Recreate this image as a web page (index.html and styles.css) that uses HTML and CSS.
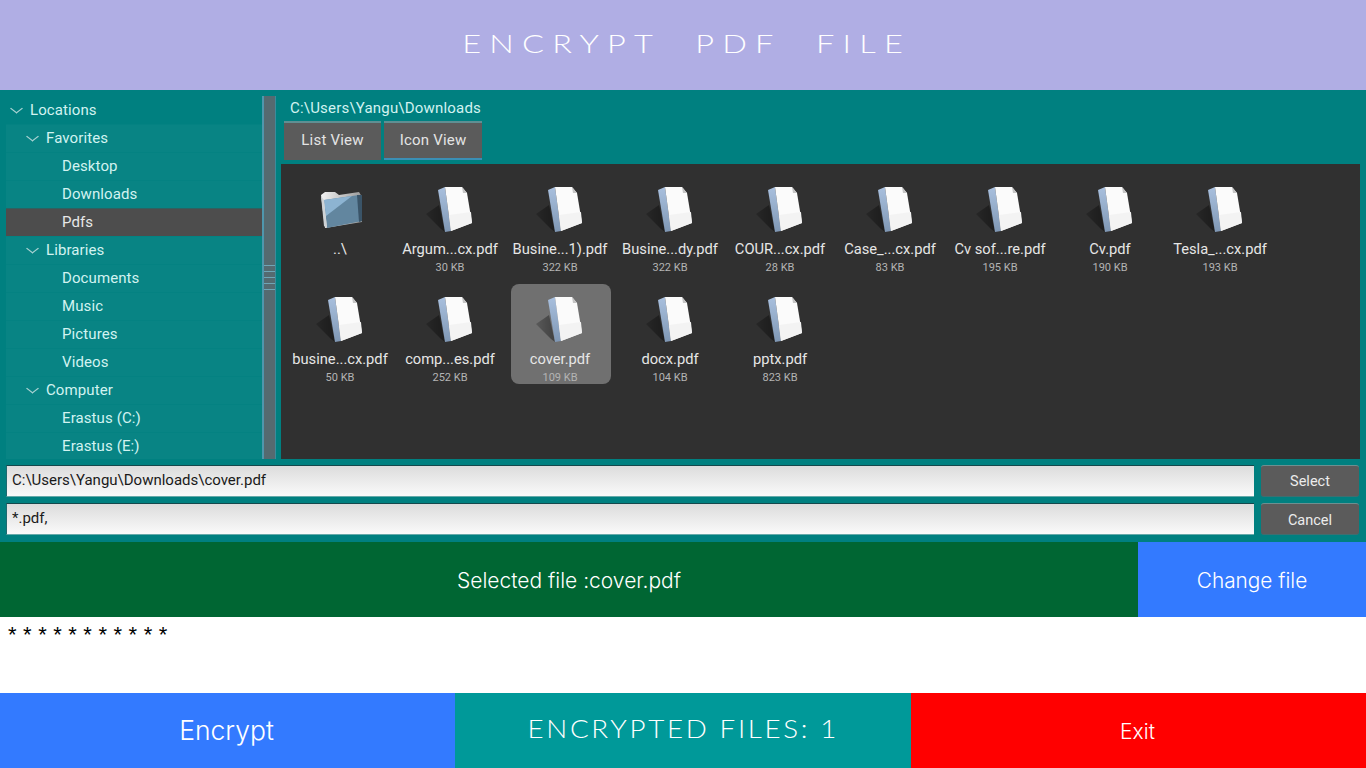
FILE: index.html
```html
<!DOCTYPE html>
<html lang="en">
<head>
    <meta charset="UTF-8">
    <meta name="viewport" content="width=device-width, initial-scale=1.0">
    <title>Encrypt PDF File</title>
    <link rel="stylesheet" href="styles.css">
</head>
<body>

    <svg class="icon-defs" width="0" height="0">
        <defs>
            <linearGradient id="docShadow" x1="0" y1="0" x2="1" y2="0">
                <stop offset="0" stop-color="#000" stop-opacity="0.2"/>
                <stop offset="0.5" stop-color="#000" stop-opacity="0.32"/>
                <stop offset="1" stop-color="#000" stop-opacity="0.42"/>
            </linearGradient>
            <linearGradient id="docSpine" x1="0" y1="0" x2="0" y2="1">
                <stop offset="0" stop-color="#a9c0de"/>
                <stop offset="1" stop-color="#7f97b4"/>
            </linearGradient>
            <linearGradient id="folderBack" x1="0" y1="0" x2="1" y2="0">
                <stop offset="0" stop-color="#f2f2f2"/>
                <stop offset="1" stop-color="#9a9a9a"/>
            </linearGradient>
            <symbol id="doc" viewBox="0 0 50 50">
                <polygon points="1,29 14,20 20,47 16,44" fill="url(#docShadow)"/>
                <polygon points="13,5 20,2 26,46 20,47" fill="url(#docSpine)"/>
                <polygon points="20,2 37,2 42,8 47,38 26,46" fill="#fbfbfb"/>
                <polygon points="24,30 46,27 47,38 26,46" fill="#f3f3f3"/>
                <polygon points="37,2 42,8 38,8" fill="#c4c4c4"/>
            </symbol>
            <symbol id="folder" viewBox="0 0 50 50">
                <polygon points="6,10 10,7 20,7 24,10 44,7 47,12 47,37 10,43" fill="url(#folderBack)"/>
                <polygon points="9,15 44,10 47,36 12,43" fill="#62869f"/>
                <polygon points="9,15 37,11 11,31" fill="#8db4d2"/>
                <polygon points="42,10 47,10 47,36 44,37" fill="#3a5468"/>
                <polygon points="6,11 9,15 12,43 9,41" fill="#cfd3d6"/>
            </symbol>
        </defs>
    </svg>

    <header class="title-bar">
        <h1 class="title-text">ENCRYPT PDF FILE</h1>
    </header>

    <main class="chooser">
        <div class="browser">
            <div class="side">
                <ul class="tree">
                    <li class="tree-row level-0 plain"><span class="arrow"></span>Locations</li>
                    <li class="tree-row level-1"><span class="arrow"></span>Favorites</li>
                    <li class="tree-row level-2">Desktop</li>
                    <li class="tree-row level-2">Downloads</li>
                    <li class="tree-row level-2 active">Pdfs</li>
                    <li class="tree-row level-1"><span class="arrow"></span>Libraries</li>
                    <li class="tree-row level-2">Documents</li>
                    <li class="tree-row level-2">Music</li>
                    <li class="tree-row level-2">Pictures</li>
                    <li class="tree-row level-2">Videos</li>
                    <li class="tree-row level-1"><span class="arrow"></span>Computer</li>
                    <li class="tree-row level-2">Erastus (C:)</li>
                    <li class="tree-row level-2">Erastus (E:)</li>
                </ul>
                <div class="splitter">
                    <span class="grip"></span>
                </div>
            </div>

            <div class="files">
                <div class="path">C:\Users\Yangu\Downloads</div>
                <div class="tabs">
                    <button class="tab list-tab">List View</button>
                    <button class="tab icon-tab">Icon View</button>
                </div>
                <div class="file-grid">
                    <div class="file"><svg class="file-icon"><use href="#folder"/></svg><span class="file-name">..\</span></div>
                    <div class="file"><svg class="file-icon"><use href="#doc"/></svg><span class="file-name">Argum...cx.pdf</span><span class="file-size">30 KB</span></div>
                    <div class="file"><svg class="file-icon"><use href="#doc"/></svg><span class="file-name">Busine...1).pdf</span><span class="file-size">322 KB</span></div>
                    <div class="file"><svg class="file-icon"><use href="#doc"/></svg><span class="file-name">Busine...dy.pdf</span><span class="file-size">322 KB</span></div>
                    <div class="file"><svg class="file-icon"><use href="#doc"/></svg><span class="file-name">COUR...cx.pdf</span><span class="file-size">28 KB</span></div>
                    <div class="file"><svg class="file-icon"><use href="#doc"/></svg><span class="file-name">Case_...cx.pdf</span><span class="file-size">83 KB</span></div>
                    <div class="file"><svg class="file-icon"><use href="#doc"/></svg><span class="file-name">Cv sof...re.pdf</span><span class="file-size">195 KB</span></div>
                    <div class="file"><svg class="file-icon"><use href="#doc"/></svg><span class="file-name">Cv.pdf</span><span class="file-size">190 KB</span></div>
                    <div class="file"><svg class="file-icon"><use href="#doc"/></svg><span class="file-name">Tesla_...cx.pdf</span><span class="file-size">193 KB</span></div>
                    <div class="file"><svg class="file-icon"><use href="#doc"/></svg><span class="file-name">busine...cx.pdf</span><span class="file-size">50 KB</span></div>
                    <div class="file"><svg class="file-icon"><use href="#doc"/></svg><span class="file-name">comp...es.pdf</span><span class="file-size">252 KB</span></div>
                    <div class="file selected"><svg class="file-icon"><use href="#doc"/></svg><span class="file-name">cover.pdf</span><span class="file-size">109 KB</span></div>
                    <div class="file"><svg class="file-icon"><use href="#doc"/></svg><span class="file-name">docx.pdf</span><span class="file-size">104 KB</span></div>
                    <div class="file"><svg class="file-icon"><use href="#doc"/></svg><span class="file-name">pptx.pdf</span><span class="file-size">823 KB</span></div>
                </div>
            </div>
        </div>

        <div class="field-row">
            <input class="field" type="text" value="C:\Users\Yangu\Downloads\cover.pdf">
            <button class="small-btn">Select</button>
        </div>
        <div class="field-row">
            <input class="field" type="text" value="*.pdf,">
            <button class="small-btn cancel-btn">Cancel</button>
        </div>
    </main>

    <section class="selected-bar">
        <div class="selected-name">Selected file :cover.pdf</div>
        <button class="change-btn">Change file</button>
    </section>

    <section class="password-box">* * * * * * * * * * *</section>

    <footer class="bottom-bar">
        <button class="bottom-btn encrypt-btn">Encrypt</button>
        <div class="bottom-btn count-box"><span class="count-text">ENCRYPTED FILES: 1</span></div>
        <button class="bottom-btn exit-btn">Exit</button>
    </footer>

</body>
</html>
```

FILE: styles.css
```css
* {
    box-sizing: border-box;
}

html, body {
    height: 100%;
}

body {
    margin: 0;
    height: 768px;
    overflow: hidden;
    display: flex;
    flex-direction: column;
    font-family: Roboto, "Liberation Sans", sans-serif;
    background-color: #fff;
}

button {
    font-family: inherit;
    border: none;
    padding: 0;
}

.icon-defs {
    position: absolute;
}

/* top title */
.title-bar {
    height: 90px;
    flex: none;
    display: flex;
    justify-content: center;
    align-items: center;
    padding: 0 0 4px 7px;
    background-color: #b0aee4;
}

.title-text {
    margin: 0;
    font-family: Lato, sans-serif;
    font-size: 25px;
    font-weight: 300;
    letter-spacing: 6.3px;
    word-spacing: 14px;
    color: #fff;
    transform: scaleX(1.3);
}

/* file chooser */
.chooser {
    height: 452px;
    flex: none;
    padding: 6px 6px 0;
    background-color: #008080;
}

.browser {
    display: flex;
    height: 363px;
    margin-bottom: 6px;
}

.side {
    width: 270px;
    flex: none;
    display: flex;
}

.tree {
    width: 256px;
    margin: 0;
    padding: 0;
    list-style: none;
    overflow: hidden;
}

.tree-row {
    height: 28px;
    display: flex;
    align-items: center;
    font-size: 15px;
    letter-spacing: 0.1px;
    color: #d2f3f1;
    background-color: rgba(255, 255, 255, 0.03);
    box-shadow: inset 0 1px 0 rgba(0, 128, 128, 0.4);
}

.tree-row.plain {
    background-color: transparent;
}

.tree-row.active {
    background-color: #4d4d4d;
    color: #e8e8e8;
}

.level-0 {
    padding-left: 5px;
}

.level-1 {
    padding-left: 21px;
}

.level-2 {
    padding-left: 56px;
}

.arrow {
    width: 7px;
    height: 7px;
    margin: -4px 10px 0 2px;
    border-right: 1px solid #a9d2d2;
    border-bottom: 1px solid #a9d2d2;
    transform: scaleX(1.3) rotate(45deg);
}

.splitter {
    width: 14px;
    display: flex;
    align-items: center;
    background-color: #556a70;
    border-left: 2px solid #4f97ad;
    border-right: 1px solid #3c8b9c;
}

.grip {
    display: block;
    width: 100%;
    height: 25px;
    background-image: repeating-linear-gradient(#6fa6b6 0, #6fa6b6 1px, transparent 1px, transparent 6px);
}

.files {
    flex: 1;
    display: flex;
    flex-direction: column;
    padding-left: 5px;
}

.path {
    height: 24px;
    padding-left: 9px;
    line-height: 24px;
    font-size: 15px;
    letter-spacing: 0.2px;
    color: #d2f3f1;
}

.tabs {
    display: flex;
    gap: 3px;
    height: 39px;
    margin: 1px 0 4px 3px;
}

.tab {
    height: 39px;
    font-size: 15px;
    letter-spacing: 0.2px;
    color: #e4e4e4;
    background-color: #5b5b5b;
    border-top: 2px solid #5f8f93;
    padding-bottom: 2px;
}

.list-tab {
    width: 97px;
    padding-bottom: 4px;
}

.icon-tab {
    width: 98px;
    border-bottom: 2px solid #3a8fb5;
}

.file-grid {
    height: 295px;
    padding: 10px;
    display: grid;
    grid-template-columns: repeat(9, 100px);
    grid-auto-rows: 100px;
    gap: 10px;
    background-color: #303030;
}

.file {
    display: flex;
    flex-direction: column;
    align-items: center;
    padding-right: 2px;
    border-radius: 8px;
    color: #e6e6e6;
}

.file.selected {
    background-color: #707070;
}

.file-icon {
    width: 50px;
    height: 50px;
    margin-top: 11px;
    flex: none;
}

.file-name {
    height: 18px;
    margin-top: 5px;
    line-height: 18px;
    font-size: 14.7px;
    white-space: nowrap;
}

.file-size {
    margin-top: 4px;
    line-height: 12px;
    font-size: 11px;
    color: #b4b4b4;
}

.field-row {
    display: flex;
    gap: 7px;
    height: 32px;
    margin-bottom: 6px;
}

.field {
    width: 1248px;
    height: 32px;
    padding: 0 5px 2px;
    font-family: inherit;
    font-size: 15px;
    color: #1a1a1a;
    border: none;
    border-top: 1px solid #14484c;
    border-left: 1px solid #1f6a70;
    border-bottom: 1px solid #6aa;
    outline: none;
    background: linear-gradient(#dcdcdc, #fafafa);
}

.small-btn {
    width: 98px;
    height: 32px;
    font-size: 14.5px;
    color: #ececec;
    background-color: #5b5b5b;
    border-top: 1px solid #6d8f90;
    border-bottom: 1px solid #3f6e70;
    border-radius: 3px;
}

.cancel-btn {
    padding-top: 2px;
}

/* selected file row */
.selected-bar {
    height: 75px;
    flex: none;
    display: flex;
}

.selected-name {
    flex: 1;
    display: flex;
    justify-content: center;
    align-items: center;
    padding-top: 2px;
    font-family: Inter, sans-serif;
    font-size: 21px;
    font-weight: 300;
    color: #fff;
    background-color: #006633;
}

.change-btn {
    width: 228px;
    padding-top: 2px;
    font-family: Inter, sans-serif;
    font-size: 20.8px;
    font-weight: 300;
    color: #fff;
    background-color: #337aff;
}

.password-box {
    height: 76px;
    flex: none;
    padding: 5px 8px;
    font-family: "Liberation Sans", sans-serif;
    font-size: 22px;
    line-height: 25px;
    word-spacing: 0.4px;
    color: #000;
    background-color: #fff;
}

/* bottom buttons */
.bottom-bar {
    height: 75px;
    flex: none;
    display: grid;
    grid-template-columns: 455px 456px 455px;
}

.bottom-btn {
    display: flex;
    justify-content: center;
    align-items: center;
    color: #fff;
}

.encrypt-btn {
    font-family: Inter, sans-serif;
    font-size: 26.5px;
    font-weight: 300;
    padding: 0 2px 1px 0;
    background-color: #337aff;
}

.count-box {
    font-family: Lato, sans-serif;
    font-size: 25px;
    font-weight: 300;
    letter-spacing: 2.4px;
    padding-bottom: 6px;
    background-color: #009999;
}

.count-text {
    transform: scaleX(1.11);
}

.exit-btn {
    font-family: Inter, sans-serif;
    font-size: 21px;
    font-weight: 300;
    padding: 2px 2px 0 0;
    background-color: #ff0000;
}
```
